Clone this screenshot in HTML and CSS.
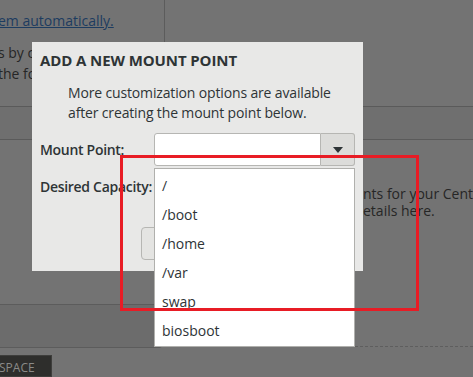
FILE: index.html
```html
<!DOCTYPE html>
<html lang="en">
<head>
    <title>Add a New Mount Point</title>
    <link rel="stylesheet" href="styles.css">
</head>
<body>

<div class="screen">
    <div class="page">
        <div class="top">
            <div class="pane-left">
                <p class="link">em automatically.</p>
                <p>s by clicking</p>
                <p>the form</p>
            </div>
        </div>
        <div class="toolbar"></div>
        <div class="middle">
            <p>nts for your CentOS</p>
            <p>etails here.</p>
        </div>
        <div class="lower">
            <div class="lower-box"></div>
            <div class="dashed"></div>
        </div>
        <div class="footer">
            <span class="space-btn">SPACE</span>
        </div>
    </div>

    <div class="dialog">
        <h1>ADD A NEW MOUNT POINT</h1>
        <p class="hint">More customization options are available<br>after creating the mount point below.</p>
        <div class="form">
            <label>Mount Point:</label>
            <div class="combo">
                <span class="entry"></span>
                <span class="arrow-btn"><span class="arrow"></span></span>
            </div>
            <label>Desired Capacity:</label>
            <span class="entry cap"></span>
        </div>
        <div class="actions">
            <button class="btn"></button>
        </div>
    </div>

    <ul class="popup">
        <li>/</li>
        <li>/boot</li>
        <li>/home</li>
        <li>/var</li>
        <li>swap</li>
        <li>biosboot</li>
    </ul>

    <div class="mark"></div>
</div>

</body>
</html>
```

FILE: styles.css
```css
body {
    margin: 0;
    padding: 0;
    font-family: "Open Sans", "Noto Sans", sans-serif;
}
.screen {
    position: relative;
    width: 473px;
    height: 377px;
    overflow: hidden;
    background-color: #737373;
}
.page {
    display: flex;
    flex-direction: column;
    height: 100%;
    color: #262626;
    font-size: 14px;
}
.top {
    height: 107px;
    display: flex;
}
.pane-left {
    width: 164px;
    border-right: 1px solid #5c5c5c;
    overflow: hidden;
    white-space: nowrap;
}
.pane-left p {
    margin: 0 0 0 -2px;
    line-height: 21px;
}
.pane-left .link {
    margin-top: 10px;
    margin-bottom: 11px;
    color: #1d3c60;
    text-decoration: underline;
}
.toolbar {
    height: 32px;
    border-top: 1px solid #5a5a5a;
    border-bottom: 1px solid #5a5a5a;
    background-color: #6f6f6f;
}
.middle {
    height: 167px;
    padding-left: 363px;
    white-space: nowrap;
    overflow: hidden;
}
.middle p {
    margin: 0;
    line-height: 17px;
}
.middle p:first-child {
    margin-top: 45px;
}
.lower {
    height: 43px;
    display: flex;
    align-items: flex-end;
}
.lower-box {
    width: 170px;
    height: 42px;
    margin-left: -8px;
    border: 1px solid #5c5c5c;
    border-radius: 0 0 5px 5px;
    background-color: #6c6c6c;
}
.dashed {
    flex: 1;
    margin-left: 26px;
    margin-bottom: 1px;
    border-top: 1px dashed #5e5e5e;
}
.footer {
    padding-top: 7px;
}
.space-btn {
    display: inline-block;
    margin-left: -22px;
    padding: 3px 0 0 20px;
    width: 52px;
    height: 17px;
    background-color: #2e2e2c;
    border: 1px solid #3e3e3c;
    color: #8a8a88;
    font-size: 12px;
    line-height: 17px;
}
.dialog {
    position: absolute;
    left: 32px;
    top: 42px;
    width: 323px;
    height: 229px;
    padding: 0 0 0 8px;
    background-color: #e8e8e7;
    color: #2e3436;
}
.dialog h1 {
    margin: 0;
    padding-top: 8px;
    font-size: 15px;
    font-weight: bold;
    line-height: 20px;
    letter-spacing: -0.1px;
}
.hint {
    margin: 13px 0 0 28px;
    font-size: 14px;
    line-height: 20px;
    letter-spacing: -0.15px;
}
.form {
    display: grid;
    grid-template-columns: 114px 201px;
    row-gap: 4px;
    align-items: center;
    margin-top: 10px;
}
.form label {
    font-size: 14px;
    font-weight: 600;
    white-space: nowrap;
    letter-spacing: -0.3px;
}
.combo {
    display: flex;
    height: 33px;
}
.entry {
    box-sizing: border-box;
    height: 33px;
    flex: 1;
    background-color: #fff;
    border: 1px solid #b6b6b3;
    border-radius: 3px 0 0 3px;
}
.entry.cap {
    border-radius: 3px;
}
.arrow-btn {
    box-sizing: border-box;
    width: 34px;
    display: flex;
    align-items: center;
    justify-content: center;
    background-color: #dcdcda;
    border: 1px solid #b6b6b3;
    border-left: none;
    border-radius: 0 3px 3px 0;
}
.arrow {
    width: 0;
    height: 0;
    border-left: 5px solid transparent;
    border-right: 5px solid transparent;
    border-top: 6px solid #2e3436;
    margin-top: 1px;
}
.actions {
    margin: 24px 0 0 101px;
}
.btn {
    width: 110px;
    height: 33px;
    background-color: #e4e4e2;
    border: 1px solid #b6b6b3;
    border-radius: 4px;
    font-family: inherit;
    font-size: 14px;
}
.popup {
    position: absolute;
    left: 154px;
    top: 168px;
    width: 199px;
    margin: 0;
    padding: 2px 0 0 0;
    height: 175px;
    list-style: none;
    background-color: #fff;
    border: 1px solid #b0b0ad;
    color: #2e3436;
    font-size: 14px;
}
.popup li {
    height: 29px;
    line-height: 29px;
    padding-left: 7px;
}
.mark {
    position: absolute;
    left: 120px;
    top: 155px;
    width: 293px;
    height: 150px;
    border: 3px solid #e81c25;
}
```
